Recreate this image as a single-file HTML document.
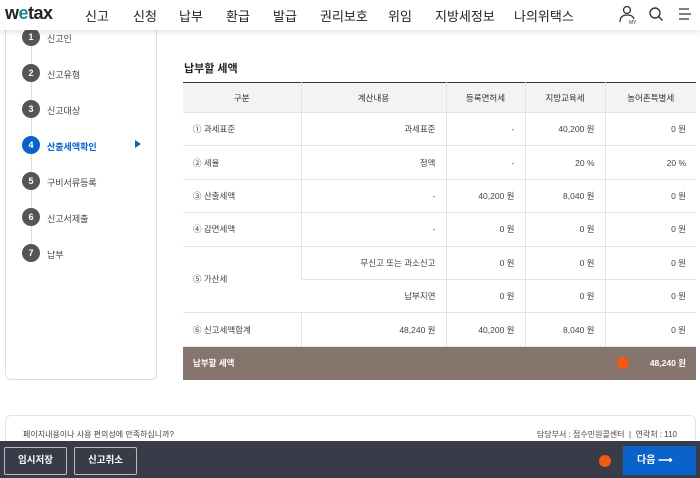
<!DOCTYPE html>
<html><head><meta charset="utf-8"><style>
*{margin:0;padding:0;box-sizing:border-box}
body{width:700px;height:478px;overflow:hidden;background:#fff;font-family:"Liberation Sans","Noto Sans CJK KR",sans-serif;position:relative;color:#333}
.hdr{position:absolute;left:0;top:0;width:700px;height:30px;background:#fff;box-shadow:0 2px 6px rgba(0,0,0,.12);z-index:5}
.logo{position:absolute;left:5px;top:3px;font-size:18px;font-weight:bold;color:#222;letter-spacing:-0.5px}
.nav{position:absolute;top:6px;font-size:13px;color:#222}
.side{position:absolute;left:5px;top:10px;width:152px;height:370px;border:1px solid #ddd;border-radius:6px}
.vl{position:absolute;left:31px;top:37px;width:1px;height:216px;background:#ddd}
.st{position:absolute;left:22px;width:18px;height:18px;border-radius:50%;background:#555;color:#fff;font-size:9px;font-weight:bold;text-align:center;line-height:18px}
.sl{position:absolute;left:47px;font-size:9px;color:#444}
.title{position:absolute;left:184px;top:60px;font-size:11px;font-weight:bold;color:#222}
table{position:absolute;left:183px;top:82px;width:513px;border-collapse:collapse;font-size:8.5px;color:#444;border-top:1px solid #333}
td,th{border-bottom:1px solid #e3e3e3;border-left:1px solid #e3e3e3;padding:0 10px}
td:first-child,th:first-child{border-left:none}
th{background:#f3f3f3;font-weight:normal;height:30px;color:#333}
td{height:33.4px}
.r{text-align:right}
.tot td{background:#85756c;color:#fff;font-weight:bold;border:none}
.foot{position:absolute;left:5px;top:415px;width:691px;height:40px;border:1px solid #e3e3e3;border-radius:6px;font-size:8px;color:#444}
.bar{position:absolute;left:0;top:441px;width:700px;height:37px;background:#393b48}
.btn{position:absolute;top:6px;height:28px;border:1px solid #bbb;border-radius:2px;color:#fff;font-size:9.5px;font-weight:bold;text-align:center;line-height:26px}
.dot{position:absolute;width:12px;height:12px;border-radius:50%;background:#f25a0f}
</style></head><body>
<div class="side"></div>
<div class="vl"></div>
<div class="st" style="top:28px">1</div><div class="sl" style="top:32px">신고인</div>
<div class="st" style="top:64px">2</div><div class="sl" style="top:68px">신고유형</div>
<div class="st" style="top:100px">3</div><div class="sl" style="top:104px">신고대상</div>
<div class="st" style="top:136px;background:#0a63c9">4</div><div class="sl" style="top:140px;color:#0a63c9;font-weight:bold">산출세액확인</div>
<div style="position:absolute;left:135px;top:140px;width:0;height:0;border-left:6px solid #0a63c9;border-top:4px solid transparent;border-bottom:4px solid transparent"></div>
<div class="st" style="top:172px">5</div><div class="sl" style="top:176px">구비서류등록</div>
<div class="st" style="top:208px">6</div><div class="sl" style="top:212px">신고서제출</div>
<div class="st" style="top:244px">7</div><div class="sl" style="top:248px">납부</div>

<div class="hdr">
<div class="logo">w<span style="color:#1a8a9a">e</span>tax</div>
<div class="nav" style="left:85px">신고</div><div class="nav" style="left:133px">신청</div><div class="nav" style="left:179px">납부</div><div class="nav" style="left:226px">환급</div><div class="nav" style="left:273px">발급</div><div class="nav" style="left:320px">권리보호</div><div class="nav" style="left:388px">위임</div><div class="nav" style="left:435px">지방세정보</div><div class="nav" style="left:514px">나의위택스</div>
<svg style="position:absolute;left:618px;top:5px" width="20" height="20" viewBox="0 0 20 20" fill="none" stroke="#333" stroke-width="1.3"><circle cx="9" cy="5" r="3.5"/><path d="M2 17 Q2 10 9 10 Q15 10 16 14"/><text x="11" y="19" font-size="5" fill="#333" stroke="none">MY</text></svg>
<svg style="position:absolute;left:648px;top:6px" width="16" height="16" viewBox="0 0 16 16" fill="none" stroke="#333" stroke-width="1.4"><circle cx="7" cy="7" r="5"/><path d="M10.5 10.5 L14.5 14.5"/></svg>
<svg style="position:absolute;left:678px;top:7px" width="14" height="14" viewBox="0 0 14 14" stroke="#333" stroke-width="1.3"><path d="M1 2H11M1 7H13M1 12H11"/></svg>
</div>

<div class="title">납부할 세액</div>
<table>
<tr><th style="width:118px">구분</th><th style="width:145px">계산내용</th><th style="width:79px">등록면허세</th><th style="width:80px">지방교육세</th><th>농어촌특별세</th></tr>
<tr><td>① 과세표준</td><td class="r">과세표준</td><td class="r">-</td><td class="r">40,200 원</td><td class="r">0 원</td></tr>
<tr><td>② 세율</td><td class="r">정액</td><td class="r">-</td><td class="r">20 %</td><td class="r">20 %</td></tr>
<tr><td>③ 산출세액</td><td class="r">-</td><td class="r">40,200 원</td><td class="r">8,040 원</td><td class="r">0 원</td></tr>
<tr><td>④ 감면세액</td><td class="r">-</td><td class="r">0 원</td><td class="r">0 원</td><td class="r">0 원</td></tr>
<tr><td rowspan="2">⑤ 가산세</td><td class="r">무신고 또는 과소신고</td><td class="r">0 원</td><td class="r">0 원</td><td class="r">0 원</td></tr>
<tr><td class="r">납부지연</td><td class="r">0 원</td><td class="r">0 원</td><td class="r">0 원</td></tr>
<tr><td>⑥ 신고세액합계</td><td class="r">48,240 원</td><td class="r">40,200 원</td><td class="r">8,040 원</td><td class="r">0 원</td></tr>
<tr class="tot"><td colspan="4">납부할 세액</td><td class="r">48,240 원</td></tr>
</table>
<div class="dot" style="left:617px;top:357px"></div>

<div class="foot"><span style="position:absolute;left:17px;top:13px">페이지내용이나 사용 편의성에 만족하십니까?</span><span style="position:absolute;right:18px;top:13px">담당부서 : 접수민원콜센터 &nbsp;|&nbsp; 연락처 : 110</span></div>
<div class="bar">
<div class="btn" style="left:4px;width:63px">임시저장</div>
<div class="btn" style="left:74px;width:63px">신고취소</div>
<div class="dot" style="left:599px;top:14px"></div>
<div style="position:absolute;left:623px;top:5px;width:73px;height:29px;background:#0a63c9;color:#fff;font-size:10px;font-weight:bold;line-height:29px;padding-left:14px">다음 ⟶</div>
</div>
</body></html>
